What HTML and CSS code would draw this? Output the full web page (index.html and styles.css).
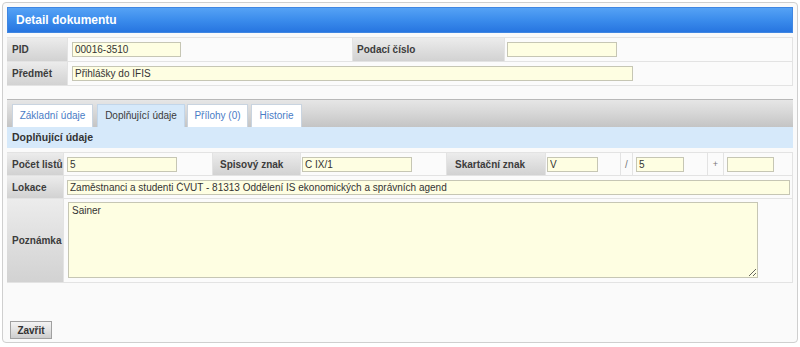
FILE: index.html
```html
<!DOCTYPE html>
<html lang="cs">
<head>
<meta charset="utf-8">
<title>Detail dokumentu</title>
<link rel="stylesheet" href="styles.css">
</head>
<body>
<div class="panel">
  <div class="header">Detail dokumentu</div>

  <div class="tbl top">
    <div class="row">
      <div class="lbl l-pid">PID</div>
      <div class="val v-pid"><input class="inp w-pid" value="00016-3510"></div>
      <div class="lbl l-podaci">Podací číslo</div>
      <div class="val v-podaci grow"><input class="inp w-podaci" value=""></div>
    </div>
    <div class="row">
      <div class="lbl l-pid">Předmět</div>
      <div class="val v-pred grow"><input class="inp w-pred" value="Přihlášky do IFIS"></div>
    </div>
  </div>

  <div class="tabbar">
    <div class="tab">Základní údaje</div>
    <div class="tab active">Doplňující údaje</div>
    <div class="tab">Přílohy (0)</div>
    <div class="tab">Historie</div>
  </div>
  <div class="section">Doplňující údaje</div>

  <div class="tbl bottom">
    <div class="row r3">
      <div class="lbl l-small">Počet listů</div>
      <div class="val c2"><input class="inp w-110" value="5"></div>
      <div class="lbl c3">Spisový znak</div>
      <div class="val c4"><input class="inp w-109" value="C IX/1"></div>
      <div class="lbl c5">Skartační znak</div>
      <div class="val c6"><input class="inp w-51" value="V"></div>
      <div class="sep c7">/</div>
      <div class="val c8"><input class="inp w-48" value="5"></div>
      <div class="sep c9">+</div>
      <div class="val c10 grow"><input class="inp w-47" value=""></div>
    </div>
    <div class="row r4">
      <div class="lbl l-small">Lokace</div>
      <div class="val v-lok grow"><input class="inp full" value="Zaměstnanci a studenti ČVUT - 81313 Oddělení IS ekonomických a správních agend"></div>
    </div>
    <div class="row r5">
      <div class="lbl l-small">Poznámka</div>
      <div class="val v-pozn grow"><textarea class="area">Sainer</textarea></div>
    </div>
  </div>

  <div class="footer">
    <button class="btn">Zavřit</button>
  </div>
</div>
</body>
</html>
```

FILE: styles.css
```css
* { box-sizing: border-box; }
html, body { margin: 0; padding: 0; background: #ffffff; }
body { font-family: "Liberation Sans", Arial, sans-serif; font-size: 10px; color: #333; }

.panel {
  margin: 2px;
  width: 796px;
  height: 341px;
  border: 1px solid #cfcfcf;
  border-radius: 4px;
  background: #fafafa;
  padding: 4px 4px 3px 4px;
  display: flex;
  flex-direction: column;
}

.header {
  height: 26px;
  background: linear-gradient(to bottom, #55a2f5 0%, #3b8cec 50%, #2775e0 100%);
  border: 1px solid #3f86e2;
  color: #fff;
  font-weight: bold;
  font-size: 12px;
  line-height: 24px;
  padding-left: 8px;
}

.tbl {
  border-top: 1px solid #e3e3e3;
  border-right: 1px solid #e3e3e3;
  background: #fbfbfb;
}
.top { margin-top: 4px; }
.row {
  display: flex;
  border-bottom: 1px solid #e3e3e3;
}
.top .row { height: 24px; }
.r3, .r4 { height: 23px; }
.r5 { height: 84px; }

.lbl {
  background: linear-gradient(to bottom, #ececec 0%, #dcdcdc 60%, #d2d2d2 100%);
  font-weight: bold;
  color: #3c3c3c;
  display: flex;
  align-items: center;
  border-right: 1px solid #e3e3e3;
  flex: none;
  white-space: nowrap;
}
.val {
  display: flex;
  align-items: center;
  border-right: 1px solid #e3e3e3;
  flex: none;
}
.grow { flex: 1; border-right: none; }

.l-pid { width: 61px; padding-left: 5px; }
.v-pid { width: 285px; padding-left: 4px; }
.l-podaci { width: 152px; padding-left: 4px; }
.v-podaci { padding-left: 2px; }
.v-pred { padding-left: 4px; }

.inp {
  height: 15px;
  border: 1px solid #c6c6b4;
  background: #fefee2;
  font-family: "Liberation Sans", Arial, sans-serif;
  font-size: 10px;
  color: #333;
  padding: 0 2px;
  margin: 0;
  outline: none;
}
.w-pid { width: 109px; }
.w-podaci { width: 110px; }
.w-pred { width: 561px; }
.w-110 { width: 110px; }
.w-109 { width: 110px; }
.w-51 { width: 51px; }
.w-48 { width: 48px; }
.w-47 { width: 47px; }
.full { width: 100%; }

.tabbar {
  margin-top: 13px;
  height: 28px;
  background: linear-gradient(to bottom, #e6e6e6 0%, #d6d6d6 50%, #c4c4c4 100%);
  border-top: 1px solid #b8b8b8;
  display: flex;
  align-items: flex-end;
  gap: 3px;
  padding-left: 5px;
}
.tab {
  height: 23px;
  background: #ffffff;
  border: 1px solid #c9d4e0;
  border-bottom: none;
  color: #4a7cc6;
  padding: 0;
  line-height: 22px;
  text-align: center;
  white-space: nowrap;
}
.tab:nth-child(1) { width: 81px; }
.tab:nth-child(2) { width: 88px; margin-left: 1px; }
.tab:nth-child(3) { width: 61px; margin-left: -1px; }
.tab:nth-child(4) { width: 51px; }
.tab.active {
  background: #d6e9fa;
  border-color: #c2d6ea;
  color: #3a3a3a;
}

.section {
  height: 21px;
  background: #d6e9fa;
  font-weight: bold;
  font-size: 10.5px;
  color: #333;
  line-height: 21px;
  padding-left: 5px;
}

.bottom { margin-top: 4px; }
.l-small { width: 57px; padding-left: 5px; }
.c2 { width: 149px; padding-left: 3px; }
.c3 { width: 88px; padding-left: 7px; }
.c4 { width: 146px; padding-left: 1px; }
.c5 { width: 99px; padding-left: 8px; }
.c6 { width: 75px; padding-left: 1px; }
.sep {
  display: flex;
  align-items: center;
  justify-content: center;
  color: #777;
  border-right: 1px solid #e3e3e3;
  flex: none;
}
.c7 { width: 12px; }
.c8 { width: 75px; padding-left: 3px; }
.c9 { width: 16px; font-size: 9px; }
.c10 { padding-left: 3px; }
.v-lok { padding: 0 2px 0 3px; }

.r5 .lbl { align-items: center; }
.v-pozn { padding-left: 4px; align-items: flex-start; padding-top: 3px; }
.area {
  width: 690px;
  height: 76px;
  border: 1px solid #c6c6b4;
  background: #fefee2;
  font-family: "Liberation Sans", Arial, sans-serif;
  font-size: 10px;
  color: #333;
  padding: 2px 3px;
  margin: 0;
  resize: both;
  outline: none;
}

.footer {
  margin-top: auto;
  padding-left: 3px;
}
.btn {
  width: 42px;
  height: 18px;
  border: 1px solid #a0a0a0;
  background: linear-gradient(to bottom, #f4f4f4 0%, #e0e0e0 55%, #cdcdcd 100%);
  font-family: "Liberation Sans", Arial, sans-serif;
  font-weight: bold;
  font-size: 10px;
  color: #333;
  padding: 0;
  display: block;
}
```
